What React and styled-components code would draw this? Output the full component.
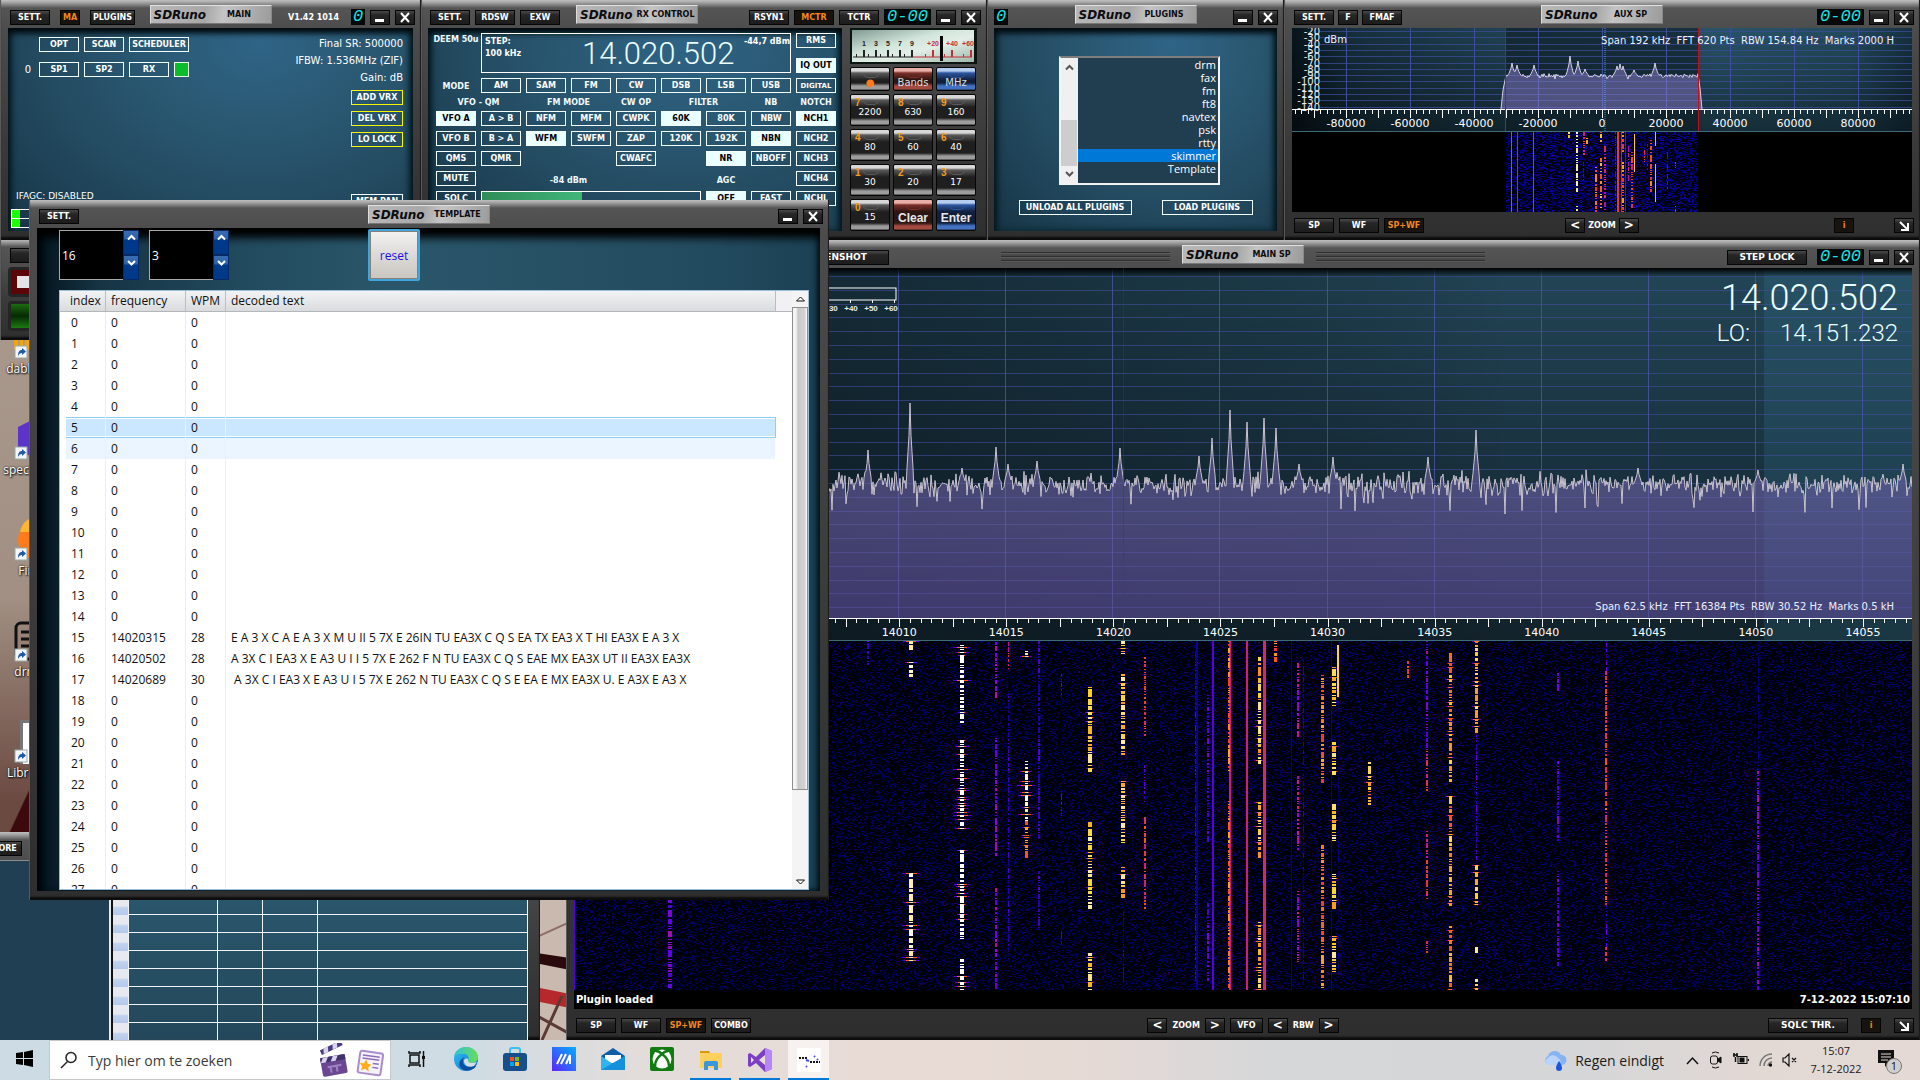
import React, { useLayoutEffect, useRef, useState } from "react";
import styled, { createGlobalStyle, css } from "styled-components";

const wide = `"DejaVu Sans", Verdana, sans-serif`;
const ui = `"Open Sans", "Noto Sans", sans-serif`;

const Global = createGlobalStyle`
  * { box-sizing: border-box; }
  html, body, #root { height: 100%; }
  body { margin: 0; overflow: hidden; background: #a99a8e; font-family: ${wide}; }
  button, input { font: inherit; margin: 0; }
  button { cursor: pointer; }
`;

/* ---------- shell ---------- */

const Screen = styled.div`
  display: flex;
  flex-direction: column;
  height: 100vh;
`;

const Desktop = styled.main`
  position: relative;
  flex: 1;
  min-height: 0;
  overflow: hidden;
  background:
    linear-gradient(115deg, transparent 0 46%, #3c0a0d 47%) 0 700px / 60px 200px no-repeat,
    linear-gradient(#b3a497, #a08f82 600px, #6b4a42 800px);
`;

const Mural = styled.svg`
  position: absolute;
  left: 530px;
  bottom: 0;
  width: 40px;
  height: 150px;
`;

/* ---------- window frame ---------- */

const Frame = styled.section`
  position: absolute;
  display: flex;
  flex-direction: column;
  left: ${(p) => p.$left}px;
  top: ${(p) => p.$top}px;
  ${(p) => (p.$width ? `width: ${p.$width}px;` : "right: 0;")}
  ${(p) => (p.$height ? `height: ${p.$height}px;` : "bottom: 0;")}
  overflow: hidden;
  background: linear-gradient(#c0c0c0 0, #aaa 2px, #8e8e8e 4px, #555 8px, #4c4c4c 30px, #3a3a3a 60%, #2e2e2e);
  box-shadow: inset -1px 0 #1c1c1c, inset 1px 0 #5a5a5a, inset 0 -3px 2px #0c0c0c;
`;

const TitleBar = styled.header`
  display: grid;
  grid-template-columns: ${(p) => p.$columns || "1fr 122px 1fr"};
  flex: none;
  height: 28px;
  padding-top: 4px;
`;

const BarGroup = styled.div`
  display: flex;
  align-items: center;
  justify-content: ${(p) => (p.$end ? "flex-end" : "flex-start")};
  gap: ${(p) => p.$gap || 5}px;
  min-width: 0;
  padding: 5px ${(p) => (p.$right ? 6 : 0)}px 4px ${(p) => p.$pad || 0}px;
`;

const Plate = styled.h1`
  display: grid;
  grid-template-columns: 54px 1fr;
  align-items: center;
  height: 19px;
  margin: 1px 0 0;
  padding-left: 3px;
  color: #0c0c10;
  font: bold 8px ${wide};
  text-align: center;
  white-space: nowrap;
  background: linear-gradient(100deg, #b8b8b8, #a8a8a8 45%, #c4c4c4 60%, #9c9c9c);
  border: 1px solid;
  border-color: #e2e2e2 #888 #777 #ddd;
`;

const Brand = styled.em`
  font: italic bold 12px ${wide};
  text-align: left;
`;

const DarkButton = styled.button`
  display: inline-flex;
  align-items: center;
  justify-content: center;
  flex: none;
  width: ${(p) => p.$w || 40}px;
  height: 15px;
  padding: 0;
  border: 1px solid #050505;
  background: linear-gradient(#4a4a4a, #262626 4px, #1c1c1c);
  color: ${(p) => (p.$on ? "#f0871f" : "#fff")};
  font: bold ${(p) => (p.$glyph ? 12 : p.$large ? 9 : 8)}px/13px ${wide};
  white-space: nowrap;
  ${(p) => p.$on && "background: #17130f;"}
`;

const Led = styled.output`
  display: flex;
  align-items: center;
  justify-content: center;
  width: ${(p) => p.$w || 47}px;
  height: 16px;
  overflow: hidden;
  background: #050808;
  color: #16e4e4;
  font: italic 17px/16px "Liberation Mono", monospace;
`;

const Version = styled.span`
  padding-right: 7px;
  color: #fff;
  font: bold 8px ${wide};
  white-space: nowrap;
`;

const Grip = styled.i`
  flex: none;
  width: 169px;
  height: 11px;
  margin: ${(p) => (p.$left ? "0 12px 0 111px" : "0 auto 0 12px")};
  background: repeating-linear-gradient(#2f2f2f 0 1px, #5c5c5c 1px 2px, #484848 2px 4px);
`;

const Body = styled.div`
  display: flex;
  flex: 1;
  min-height: 0;
  gap: 8px;
  padding: ${(p) => p.$pad || "0 8px 9px"};
`;

const glass = css`
  background: radial-gradient(ellipse at 62% 8%, #2f6486, #2a5872 32%, #234a60 62%, #173546);
  box-shadow: inset 0 5px 6px #02090d, inset 4px 0 6px #0c2530, inset -4px 0 6px #0c2530, inset 0 -2px 3px #1d5060;
`;

const Panel = styled.div`
  flex: 1;
  min-width: 0;
  ${glass}
`;

const LineButton = styled.button`
  display: flex;
  align-items: center;
  justify-content: center;
  flex: none;
  width: ${(p) => p.$w || 40}px;
  height: 15px;
  padding: 0;
  border: 1px solid ${(p) => (p.$yellow ? "#f6f600" : "#f4ffff")};
  background: ${(p) => (p.$on ? "#eaffff" : "transparent")};
  color: ${(p) => (p.$on ? "#000" : "#fff")};
  font: bold ${(p) => (p.$small ? 7 : 8)}px ${wide};
  white-space: nowrap;
`;

function MinClose() {
  return (
    <>
      <DarkButton $w={20} aria-label="Minimise">
        <svg width="14" height="11"><rect x="2" y="7" width="9" height="3" fill="#fff" /></svg>
      </DarkButton>
      <DarkButton $w={20} aria-label="Close">
        <svg width="12" height="11"><path d="M2 1l8 9M10 1l-8 9" stroke="#fff" strokeWidth="2" /></svg>
      </DarkButton>
    </>
  );
}

const Title = ({ children }) => (
  <Plate><Brand>SDRuno</Brand><span>{children}</span></Plate>
);

/* ---------- MAIN ---------- */

const MainPanel = styled(Panel)`
  display: flex;
  justify-content: space-between;
  padding: 9px 10px 3px 3px;
  color: #fff;
  font-size: 10px;
`;

const Column = styled.div`
  display: flex;
  flex-direction: column;
  align-items: ${(p) => (p.$end ? "flex-end" : "flex-start")};
`;

const ButtonRow = styled.div`
  display: flex;
  align-items: center;
  gap: 5px;
  height: 15px;
  margin-bottom: 10px;
`;

const Slot = styled.span`
  width: 23px;
  padding-right: 3px;
  text-align: right;
`;

const Green = styled.i`
  width: 15px;
  height: 15px;
  background: #0bbc2b;
  border: 1px solid #eaffea;
`;

const Info = styled.p`
  margin: 0;
  height: 17px;
  line-height: 13px;
  white-space: nowrap;
`;

const VrxStack = styled.div`
  display: grid;
  gap: 6px;
  margin-top: 2px;
`;

const Push = styled.div`
  margin-top: auto;
  ${(p) => p.$tail && `padding-bottom: ${p.$tail}px;`}
`;

const Agc = styled.div`
  padding: 0 0 8px 5px;
  font-size: 9px;
`;

const Meters = styled.div`
  display: grid;
  grid-template-rows: 9px 8px;
  width: 120px;
  border: 1px solid #fff;
  background: linear-gradient(90deg, #1bff00 8px, transparent 8px);
`;
const MeterLine = styled.i`
  border-bottom: ${(p) => (p.$rule ? "1px solid #fff" : "0")};
`;

function MainWindow() {
  return (
    <Frame $left={0} $top={0} $width={421} $height={240}>
      <TitleBar>
        <BarGroup $pad={10} $gap={10}>
          <DarkButton>SETT.</DarkButton>
          <DarkButton $w={20} $on>MA</DarkButton>
          <DarkButton $w={45}>PLUGINS</DarkButton>
        </BarGroup>
        <Title>MAIN</Title>
        <BarGroup $end $right>
          <Version>V1.42 1014</Version>
          <Led $w={14}>0</Led>
          <MinClose />
        </BarGroup>
      </TitleBar>
      <Body>
        <MainPanel>
          <Column>
            <ButtonRow>
              <Slot />
              <LineButton>OPT</LineButton>
              <LineButton>SCAN</LineButton>
              <LineButton $w={60}>SCHEDULER</LineButton>
            </ButtonRow>
            <ButtonRow>
              <Slot>0</Slot>
              <LineButton>SP1</LineButton>
              <LineButton>SP2</LineButton>
              <LineButton>RX</LineButton>
              <Green />
            </ButtonRow>
            <Push>
              <Agc>IFAGC: DISABLED</Agc>
              <Meters><MeterLine $rule /><MeterLine /></Meters>
            </Push>
          </Column>
          <Column $end>
            <Info>Final SR: 500000</Info>
            <Info>IFBW: 1.536MHz (ZIF)</Info>
            <Info>Gain: dB</Info>
            <VrxStack>
              <LineButton $w={52} $yellow>ADD VRX</LineButton>
              <LineButton $w={52} $yellow>DEL VRX</LineButton>
              <LineButton $w={52} $yellow>LO LOCK</LineButton>
            </VrxStack>
            <Push $tail={19}><LineButton $w={52}>MEM PAN</LineButton></Push>
          </Column>
        </MainPanel>
      </Body>
    </Frame>
  );
}

/* ---------- RX CONTROL ---------- */

const RxPanel = styled(Panel)`
  display: grid;
  grid-template-columns: repeat(9, 40px);
  grid-template-rows: 40px 15px 8px repeat(5, 15px);
  gap: 5px;
  align-content: start;
  padding: 5px 8px;
`;

const Legend = styled.span`
  grid-column: span ${(p) => p.$span || 1};
  align-self: ${(p) => p.$align || "center"};
  justify-self: center;
  padding-top: 2px;
  color: #f1fbff;
  font: bold 8px/10px ${wide};
  white-space: nowrap;
`;

const FreqBox = styled.div`
  grid-column: span 7;
  display: grid;
  grid-template-columns: 97px 1fr auto;
  border: 1px solid #fff;
  padding: 2px 0 0 3px;
  color: #fff;
  font: bold 8px/12px ${wide};
  white-space: nowrap;
`;

const Digits = styled.output`
  color: #eaffff;
  font: 300 ${(p) => p.$size}px/1 Roboto, sans-serif;
`;

const BoxDigits = styled(Digits)`
  padding-top: 2px;
`;

const Stack = styled.div`
  display: flex;
  flex-direction: column;
  justify-content: space-between;
`;

const Level = styled.div`
  grid-column: span 5;
  height: 15px;
  border: 1px solid #fff;
  background: linear-gradient(90deg, #2f8c58, #41b679) 0 0 / 46% 100% no-repeat;
`;

const Blank = styled.i`
  grid-column: span ${(p) => p.$span || 1};
`;

const Keys = styled.div`
  display: grid;
  grid-template-columns: repeat(3, 40px);
  grid-template-rows: 36px 24px repeat(4, 32px);
  gap: 3px 3px;
  width: 128px;
`;

const MeterFace = styled.svg`
  grid-column: span 3;
  width: 127px;
  height: 36px;
`;

const tones = {
  grey: ["#d8d8d8", "#5a5a5a", "#1f1f1f", "#9c9c9c"],
  red: ["#e8b0a8", "#7a2f28", "#2c1512", "#a34a41"],
  blue: ["#b5cdf0", "#2c55a0", "#101f3c", "#4272c4"],
};

const Key = styled.button`
  position: relative;
  padding: ${(p) => (p.$digit ? "4px 0 0" : "6px 0 0")};
  border: 1px solid #060606;
  border-radius: 2px;
  color: ${(p) => p.$ink || "#fff"};
  font: ${(p) => (p.$big ? `bold 12px "Liberation Sans", sans-serif` : p.$mid ? `10px ${wide}` : `9px ${wide}`)};
  background: linear-gradient(
    ${(p) => tones[p.$tone || "grey"][0]} 0,
    ${(p) => tones[p.$tone || "grey"][0]} 3px,
    ${(p) => tones[p.$tone || "grey"][1]} 5px,
    ${(p) => tones[p.$tone || "grey"][2]} 12px,
    ${(p) => tones[p.$tone || "grey"][2]} calc(100% - 7px),
    ${(p) => tones[p.$tone || "grey"][3]} calc(100% - 4px),
    ${(p) => tones[p.$tone || "grey"][3]} calc(100% - 1px),
    #222
  );
  &::before {
    content: "";
    position: absolute;
    top: 5px;
    left: 12px;
    width: 14px;
    height: 4px;
    border: 1px solid ${(p) => tones[p.$tone || "grey"][1]};
    border-top: 0;
    border-radius: 0 0 7px 7px;
  }
`;

const KeyDigit = styled.b`
  position: absolute;
  left: 4px;
  top: 3px;
  color: #f59a1c;
  font: bold 10px/10px "Liberation Sans", sans-serif;
`;

function SMeter() {
  const ticks = [14, 26, 38, 50, 62, 83, 102, 121];
  const names = ["1", "3", "5", "7", "9", "+20", "+40", "+60"];
  return (
    <MeterFace viewBox="0 0 127 36">
      <defs>
        <linearGradient id="face" x1="0" y1="0" x2="1" y2="1">
          <stop offset="0" stopColor="#7f9a92" /><stop offset=".4" stopColor="#d3e6dc" />
          <stop offset=".6" stopColor="#e2eee6" /><stop offset="1" stopColor="#9fb8ac" />
        </linearGradient>
      </defs>
      <rect width="127" height="36" fill="#0a1512" />
      <rect x="2" y="2" width="122" height="32" fill="url(#face)" />
      <path d="M3 29H63" stroke="#222" />
      <path d="M63 29H122" stroke="#c0303c" />
      {ticks.map((x, i) => (
        <g key={x} fill={i < 5 ? "#222" : "#c0303c"}>
          <rect x={x - 1} y="22" width="2" height="7" />
          <rect x={x - 8} y="26" width="1" height="3" />
          <text x={i === 7 ? 118 : x} y="18" textAnchor="middle" fontFamily="Liberation Sans" fontWeight="bold" fontSize="7">{names[i]}</text>
        </g>
      ))}
      <rect x="90" y="8" width="3" height="25" fill="#050505" />
    </MeterFace>
  );
}

const B = (t, on, small) => <LineButton key={t} $on={on} $small={small}>{t}</LineButton>;

function RxWindow() {
  const pad = [["7", "2200"], ["8", "630"], ["9", "160"], ["4", "80"], ["5", "60"], ["6", "40"], ["1", "30"], ["2", "20"], ["3", "17"], ["0", "15"]];
  return (
    <Frame $left={421} $top={0} $width={566} $height={240}>
      <TitleBar $columns="155px 122px 1fr">
        <BarGroup $pad={9}>
          <DarkButton>SETT.</DarkButton><DarkButton>RDSW</DarkButton><DarkButton>EXW</DarkButton>
        </BarGroup>
        <Title>RX CONTROL</Title>
        <BarGroup $end $right>
          <DarkButton>RSYN1</DarkButton><DarkButton $on>MCTR</DarkButton><DarkButton>TCTR</DarkButton>
          <Led>0-00</Led>
          <MinClose />
        </BarGroup>
      </TitleBar>
      <Body $pad="0 9px 9px 7px">
        <RxPanel>
          <Legend $align="start">DEEM 50u</Legend>
          <FreqBox>
            <span>STEP:<br />100 kHz</span>
            <BoxDigits $size={31}>14.020.502</BoxDigits>
            <span>-44,7 dBm</span>
          </FreqBox>
          <Stack>{B("RMS")}{B("IQ OUT", true)}</Stack>

          <Legend>MODE</Legend>
          {["AM", "SAM", "FM", "CW", "DSB", "LSB", "USB"].map((t) => B(t))}
          {B("DIGITAL", false, true)}

          <Legend $span={2}>VFO - QM</Legend>
          <Legend $span={2}>FM MODE</Legend>
          <Legend>CW OP</Legend>
          <Legend $span={2}>FILTER</Legend>
          <Legend>NB</Legend>
          <Legend>NOTCH</Legend>

          {B("VFO A", true)}{["A > B", "NFM", "MFM", "CWPK"].map((t) => B(t))}{B("60K", true)}{B("80K")}{B("NBW")}{B("NCH1", true)}
          {B("VFO B")}{B("B > A")}{B("WFM", true)}{["SWFM", "ZAP", "120K", "192K"].map((t) => B(t))}{B("NBN", true)}{B("NCH2")}
          {B("QMS")}{B("QMR")}<Blank $span={2} />{B("CWAFC")}<Blank />{B("NR", true)}{B("NBOFF")}{B("NCH3")}
          {B("MUTE")}<Blank /><Legend $span={2} $align="end">-84 dBm</Legend><Blank $span={2} /><Legend $align="end">AGC</Legend><Blank />{B("NCH4")}
          {B("SQLC")}<Level />{B("OFF", true)}{B("FAST")}{B("NCHL")}
        </RxPanel>
        <Keys>
          <SMeter />
          <Key $ink="#ff7a1c" $mid>●</Key>
          <Key $tone="red" $mid $ink="#ddd">Bands</Key>
          <Key $tone="blue" $mid $ink="#ddd">MHz</Key>
          {pad.map(([d, t]) => <Key key={d} $digit><KeyDigit>{d}</KeyDigit>{t}</Key>)}
          <Key $tone="red" $big $ink="#e8e8e8">Clear</Key>
          <Key $tone="blue" $big $ink="#e8e8e8">Enter</Key>
        </Keys>
      </Body>
    </Frame>
  );
}

/* ---------- PLUGINS ---------- */

const PluginPanel = styled(Panel)`
  display: flex;
  flex-direction: column;
  align-items: center;
  gap: 15px;
  padding-top: 28px;
`;

const ListBox = styled.div`
  display: flex;
  width: 161px;
  height: 129px;
  margin-left: 8px;
  border: 2px solid #f3f3f3;
  border-top-color: #7d7d7d;
  background: #203e50;
`;

const SideScroll = styled.div`
  display: flex;
  flex-direction: column;
  justify-content: space-between;
  align-items: center;
  width: 17px;
  padding: 5px 0;
  background: linear-gradient(#cdcdcd, #cdcdcd) 0 62px / 16px 46px no-repeat #f0f0f0;
`;

const List = styled.ul`
  flex: 1;
  margin: 0;
  padding: 0;
  list-style: none;
  color: #fff;
  font: 11px/13px ${ui};
  text-align: right;
`;

const ListItem = styled.li`
  padding-right: 2px;
  background: ${(p) => (p["aria-selected"] ? "#0078d7" : "transparent")};
`;

const WideRow = styled.div`
  display: flex;
  gap: 30px;
`;

const Chevron = ({ down, color = "#555", size = 9 }) => (
  <svg width={size} height={size} viewBox="0 0 9 9">
    <path d={down ? "M1 3l3.500 3.500L8 3" : "M1 6.500L4.500 3 8 6.500"} fill="none" stroke={color} strokeWidth="2" />
  </svg>
);

function PluginsWindow() {
  return (
    <Frame $left={987} $top={0} $width={297} $height={240}>
      <TitleBar>
        <BarGroup $pad={7}><Led $w={14}>0</Led></BarGroup>
        <Title>PLUGINS</Title>
        <BarGroup $end $right><MinClose /></BarGroup>
      </TitleBar>
      <Body $pad="0 7px 9px">
        <PluginPanel>
          <ListBox>
            <SideScroll><Chevron /><Chevron down /></SideScroll>
            <List role="listbox" aria-label="Plugins">
              {["drm", "fax", "fm", "ft8", "navtex", "psk", "rtty", "skimmer", "Template"].map((n) => (
                <ListItem key={n} role="option" aria-selected={n === "skimmer"}>{n}</ListItem>
              ))}
            </List>
          </ListBox>
          <WideRow>
            <LineButton $w={113}>UNLOAD ALL PLUGINS</LineButton>
            <LineButton $w={91}>LOAD PLUGINS</LineButton>
          </WideRow>
        </PluginPanel>
      </Body>
    </Frame>
  );
}

/* ---------- spectrum + waterfall drawing ---------- */

function seeded(seed) {
  let s = seed;
  return () => {
    s = (s * 1664525 + 1013904223) % 4294967296;
    return s / 4294967296;
  };
}

function useWidth(initial) {
  const ref = useRef(null);
  const [width, setWidth] = useState(initial);
  useLayoutEffect(() => {
    const read = () => setWidth(ref.current.clientWidth);
    read();
    window.addEventListener("resize", read);
    return () => window.removeEventListener("resize", read);
  }, []);
  return [ref, width];
}

function tracePoints({ from, to, base, jitter, peaks, seed, dips }) {
  const rnd = seeded(seed);
  const out = [];
  for (let x = from; x <= to; x += 1) {
    let y = base + (rnd() + rnd() + rnd() - 1.5) * jitter;
    if (rnd() < dips) y += rnd() * jitter * 2.4;
    for (const [px, py] of peaks) {
      const d = Math.abs(x - px);
      if (d < 4) y = Math.min(y, py + (d < 1 ? 0 : (base - py) * (0.2 + d * 0.2)));
    }
    out.push(`${x} ${y.toFixed(1)}`);
  }
  return out;
}

const stops = [
  [0, 0, 0, 0], [0.2, 10, 0, 150], [0.4, 100, 0, 235], [0.55, 210, 20, 130],
  [0.7, 250, 70, 20], [0.85, 255, 210, 30], [1, 255, 255, 255],
];
function heat(v) {
  const t = Math.max(0, Math.min(1, v));
  for (let i = 1; i < stops.length; i += 1) {
    if (t <= stops[i][0]) {
      const a = stops[i - 1];
      const b = stops[i];
      const k = (t - a[0]) / (b[0] - a[0]);
      return `rgb(${[1, 2, 3].map((j) => Math.round(a[j] + (b[j] - a[j]) * k)).join(",")})`;
    }
  }
  return "#fff";
}

const WaterCanvas = styled.canvas`
  display: block;
  flex: 1;
  width: 100%;
  min-height: 0;
`;

/* signals: [x, heat, width, [[y0, y1], ...], solid] in the units of refWidth */
function Waterfall({ refWidth, band, signals, noise, seed, splash }) {
  const ref = useRef(null);
  useLayoutEffect(() => {
    const paint = () => {
      const c = ref.current;
      const w = (c.width = c.clientWidth);
      const h = (c.height = c.clientHeight);
      const g = c.getContext("2d");
      const rnd = seeded(seed);
      const k = w / refWidth;
      g.fillStyle = "#000";
      g.fillRect(0, 0, w, h);
      const [b0, b1] = band.map((v) => Math.round(v * k));
      g.fillStyle = "#000008";
      g.fillRect(b0, 0, b1 - b0, h);
      for (let y = 0; y < h; y += 1) {
        for (let x = b0; x < b1; x += 2) {
          const r = rnd();
          if (r < noise) {
            g.fillStyle = `rgb(${r < noise / 12 ? 30 : 0},0,${Math.round(44 + rnd() * (noise > 0.4 ? 130 : 66))})`;
            g.fillRect(x, y, 2, 1);
          }
        }
      }
      signals.forEach(([sx, level, sw, spans, solid]) => {
        const x = Math.round(sx * k);
        const hot = level > 0.96;
        spans.forEach(([y0, y1]) => {
          let y = y0;
          while (y < Math.min(y1, h)) {
            const run = solid ? y1 - y0 : 1 + Math.floor(rnd() * rnd() * 9);
            const v = solid ? level : level - rnd() * (hot ? 0.06 : 0.16);
            const end = Math.min(y + run, y1);
            if (splash && level > 0.84 && !solid && rnd() < (hot ? 0.5 : 0.3)) {
              const s = hot ? 4 + Math.floor(rnd() * 6) : 3 + Math.floor(rnd() * 3);
              g.fillStyle = heat(0.36);
              g.fillRect(x - s, y, s * 2, 1);
              g.fillStyle = heat(0.72);
              g.fillRect(x - Math.round(s * 0.6), y, Math.round(s * 1.2), 1);
            }
            g.fillStyle = heat(v);
            g.fillRect(x - Math.floor(sw / 2), y, sw, end - y);
            y = end + (solid ? 0 : 1 + Math.floor(rnd() * 2));
          }
        });
      });
    };
    paint();
    window.addEventListener("resize", paint);
    return () => window.removeEventListener("resize", paint);
  }, [refWidth, band, signals, noise, seed, splash]);
  return <WaterCanvas ref={ref} />;
}

const Plot = styled.div`
  position: relative;
  flex: none;
  height: ${(p) => p.$h}px;
`;

const PlotSvg = styled.svg`
  display: block;
  width: 100%;
  height: 100%;
  font: 11px ${wide};
`;

const PlotInfo = styled.div`
  position: absolute;
  right: 18px;
  ${(p) => (p.$bottom ? "bottom: 28px;" : "top: 6px;")}
  color: #eef;
  font: 10px/13px ${wide};
  white-space: pre;
`;

const Screenful = styled.div`
  display: flex;
  flex-direction: column;
  flex: 1;
  min-height: 0;
  margin: 0 8px;
  background: #000;
`;

const Tools = styled.footer`
  display: grid;
  grid-template-columns: 1fr auto 1fr;
  align-items: start;
  flex: none;
  height: ${(p) => p.$h}px;
  padding: ${(p) => p.$top}px 6px 0;
`;

const ToolGroup = styled.div`
  display: flex;
  align-items: center;
  justify-content: ${(p) => (p.$end ? "flex-end" : "flex-start")};
  gap: ${(p) => p.$gap || 5}px;
  padding-left: ${(p) => (p.$start ? 4 : 0)}px;
  color: #fff;
  font: bold 8px ${wide};
`;

const ArrowIcon = () => (
  <svg width="12" height="12"><path d="M2 2l7 7M10 3v7H3" fill="none" stroke="#fff" strokeWidth="2" /></svg>
);

function Ruler({ width, y, step, origin, minor, labels, dy }) {
  const marks = [];
  const per = step / minor;
  for (let i = -Math.ceil(origin / per); origin + i * per < width; i += 1) {
    const x = Math.round(origin + i * per);
    const len = i % (minor / 2) === 0 ? 8 : 4;
    marks.push(<rect key={i} x={x} y={y} width="1" height={len} fill="#fff" />);
  }
  return (
    <g>
      <rect x="0" y={y - 1} width={width} height="1" fill="#fff" />
      {marks}
      {labels.map(([i, t]) => (
        <text key={t} x={origin + i * step} y={y + dy} textAnchor="middle" fill="#fff">{t}</text>
      ))}
    </g>
  );
}

/* ---------- AUX SP ---------- */

const auxPeaks = [[220, 35], [225, 37], [242, 37], [278, 28], [286, 33], [293, 41], [325, 38], [328, 36], [331, 38], [363, 35], [342, 42]];
const auxBand = [214, 406];
const all = [[0, 400]];
const auxSignals = [
  [219, 0.66, 1, all, 1], [225, 0.55, 1, all, 1], [241, 0.6, 1, all, 1], [277, 0.95, 2, [[0, 8]]],
  [285, 0.97, 2, [[0, 62], [74, 80]]], [292, 0.7, 2, [[0, 24]]], [295, 0.9, 2, [[6, 12]]], [291, 0.45, 1, [[30, 50]]],
  [304, 0.8, 2, [[35, 80]]], [309, 0.86, 2, [[26, 76], [0, 12]]], [313, 0.65, 2, [[14, 66], [70, 80]]],
  [326, 0.65, 2, all, 1], [329, 0.55, 1, all, 1], [331, 0.8, 2, [[0, 20], [30, 80]]], [333, 0.4, 1, all, 1], [336, 0.6, 1, [[14, 50]]],
  [340, 0.72, 2, [[20, 76]]], [342, 0.84, 1, [[2, 40]], 1], [323, 0.45, 1, all], [352, 0.78, 1, [[18, 30]]],
  [359, 0.78, 2, [[8, 62]]], [363, 0.82, 1, [[0, 14], [32, 70]], 1], [355, 0.45, 1, [[12, 40]]],
  [375, 0.45, 1, [[20, 58]]], [383, 0.7, 1, [[30, 36], [74, 80]]],
];

function AuxPlot() {
  const [ref, w] = useWidth(620);
  const k = w / 620;
  const mid = 310 * k;
  const step = 64 * k;
  const trace = tracePoints({
    from: Math.round(214 * k), to: Math.round(406 * k), base: 48, jitter: 2.4, seed: 5, dips: 0,
    peaks: auxPeaks.map(([x, y]) => [Math.round(x * k), y]),
  });
  const line = `M${Math.round(209 * k)} 81L${Math.round(211 * k)} 62L${trace.join("L")}L${Math.round(408 * k)} 60L${Math.round(410 * k)} 81`;
  const db = Array.from({ length: 13 }, (_, i) => i);
  return (
    <Plot ref={ref} $h={104}>
      <PlotSvg>
        <defs>
          <linearGradient id="auxbg"><stop offset="0" stopColor="#07141b" /><stop offset=".1" stopColor="#16303d" />
            <stop offset=".3" stopColor="#1e3f4f" /><stop offset=".7" stopColor="#285468" /><stop offset=".9" stopColor="#234b5d" /><stop offset="1" stopColor="#15303e" /></linearGradient>
          <linearGradient id="shade" x2="0" y2="1"><stop offset="0" stopColor="#000" stopOpacity="0" /><stop offset="1" stopColor="#000" stopOpacity=".45" /></linearGradient>
        </defs>
        <rect width={w} height="104" fill="url(#auxbg)" />
        <rect width={w} height="104" fill="url(#shade)" />
        <rect x={214 * k} width={192 * k} height="104" fill="#0e1c24" opacity=".6" />
        {db.map((i) => <rect key={i} x="28" y={3 + Math.round(i * 6.3)} width={w} height="1" fill="#3c4a94" opacity=".8" />)}
        {[-4, -3, -2, -1, 0, 1, 2, 3, 4].map((i) => <rect key={i} x={Math.round(mid + i * step)} y="0" width="1" height="81" fill="#3f4e9a" />)}
        <path d={line} fill="#8c7fd0" fillOpacity=".5" stroke="#d5cfe4" />
        {db.map((i) => <text key={i} x="28" y={7 + Math.round(i * 6.3)} textAnchor="end" fill="#e4eaf0" fontSize="10">{-20 - i * 10}</text>)}
        <text x="32" y="15" fill="#eef" fontSize="10">dBm</text>
        <Ruler width={w} y={82} step={step} origin={mid} minor={10} dy={17}
          labels={[-4, -3, -2, -1, 0, 1, 2, 3, 4].map((i) => [i, String(i * 20000)])} />
        <path d={`M${mid + 3} 0V104`} stroke="#57b4ff" strokeOpacity=".8" strokeDasharray="1 1" />
        <path d={`M${Math.round(214 * k) - 0.5} 0V104M${Math.round(406 * k) + 0.5} 0V104`} stroke="#c00f1a" />
        <rect y="103" width={w} height="1" fill="#3d6c78" />
      </PlotSvg>
      <PlotInfo>{"Span 192 kHz  FFT 620 Pts  RBW 154.84 Hz  Marks 2000 H"}</PlotInfo>
    </Plot>
  );
}

function AuxWindow() {
  return (
    <Frame $left={1284} $top={0} $height={240}>
      <TitleBar>
        <BarGroup $pad={10} $gap={4}>
          <DarkButton>SETT.</DarkButton><DarkButton $w={20}>F</DarkButton><DarkButton>FMAF</DarkButton>
        </BarGroup>
        <Title>AUX SP</Title>
        <BarGroup $end $right><Led>0-00</Led><MinClose /></BarGroup>
      </TitleBar>
      <Screenful>
        <AuxPlot />
        <Waterfall refWidth={620} band={auxBand} signals={auxSignals} noise={0.55} seed={11} />
      </Screenful>
      <Tools $h={28} $top={6}>
        <ToolGroup $start><DarkButton>SP</DarkButton><DarkButton>WF</DarkButton><DarkButton $on>SP+WF</DarkButton></ToolGroup>
        <ToolGroup $gap={3}><DarkButton $w={20} $glyph>&lt;</DarkButton>ZOOM<DarkButton $w={20} $glyph>&gt;</DarkButton></ToolGroup>
        <ToolGroup $end $gap={40}>
          <DarkButton $w={20} $on>i</DarkButton>
          <DarkButton $w={20} aria-label="Resize"><ArrowIcon /></DarkButton>
        </ToolGroup>
      </Tools>
    </Frame>
  );
}

/* ---------- MAIN SP ---------- */

const spPeaks = [
  [294, 182], [336, 135], [422, 179], [463, 193], [546, 180], [625, 188], [638, 170], [656, 142], [672, 154],
  [689, 150], [701, 160], [724, 196], [758, 189], [853, 189], [901, 162], [1063, 200], [1183, 202], [1328, 196], [388, 200], [434, 196],
];
const spBand = [0, 1337];
const spSignals = [
  [0, 0.36, 2, all, 1], [96, 0.5, 4, [[255, 400]]], [12, 0.16, 1, all],
  [294, 0.42, 2, [[0, 24]]],
  [337, 0.99, 4, [[0, 9], [21, 36], [232, 320]]],
  [388, 1.05, 4, [[4, 82], [99, 188], [209, 298], [318, 349]]],
  [422, 0.52, 2, [[1, 57], [97, 215], [247, 349]]],
  [434, 0.68, 1, [[1, 29]]], [434, 0.36, 1, [[50, 310]]],
  [452, 0.99, 3, [[10, 18], [120, 180]]], [452, 0.85, 3, [[180, 218]]],
  [465, 0.38, 2, [[0, 200], [230, 290]]], [487, 0.38, 1, [[33, 57], [150, 175], [290, 305]]],
  [516, 0.95, 4, [[46, 131], [181, 269], [312, 349]]],
  [549, 0.94, 4, [[0, 13], [33, 114], [140, 204], [226, 259]]], [549, 0.3, 1, [[270, 340]]],
  [571, 0.72, 2, [[16, 95], [176, 268]]], [570, 0.45, 1, [[124, 161]]],
  [623, 0.2, 2, all, 1], [621, 0.4, 1, [[10, 340]]], [634, 0.44, 2, [[54, 201], [262, 340]]],
  [639, 0.37, 2, all, 1],
  [656, 0.56, 2, all, 1], [655, 0.82, 2, [[0, 130], [160, 349]]],
  [672, 0.57, 2, all, 1], [684, 0.92, 3, [[16, 125], [161, 217], [281, 349]]], [689, 0.6, 3, all, 1],
  [700, 0.8, 3, [[0, 22]]], [723, 0.6, 2, [[22, 97], [135, 209], [250, 321]]], [728, 0.3, 1, [[20, 340]]],
  [747, 0.82, 3, [[34, 142], [204, 349]]],
  [759, 0.95, 4, [[26, 66], [101, 134], [163, 200], [233, 268], [295, 331]]],
  [763, 0.86, 2, [[4, 56]], 1], [763, 0.2, 1, [[60, 340]]],
  [794, 0.9, 3, [[121, 165]]], [833, 0.8, 2, [[20, 37]]],
  [852, 0.5, 2, [[0, 110]]], [852, 0.7, 2, [[110, 150], [190, 260], [300, 312]]],
  [875, 0.87, 3, [[12, 143], [155, 265], [285, 349]]],
  [901, 0.92, 3, [[0, 94]]], [901, 0.42, 1, [[94, 220]]], [901, 0.95, 3, [[224, 265], [306, 314], [338, 349]]],
  [756, 0.18, 1, all, 1], [716, 0.16, 1, all, 1],
  [983, 0.45, 2, [[32, 50], [120, 200], [230, 325]]], [1031, 0.74, 2, [[30, 265], [306, 320]]],
  [1031, 0.4, 1, [[0, 30], [265, 306]]], [1183, 0.5, 2, [[130, 349]]], [1183, 0.25, 1, [[0, 130]]],
];

const ReadOut = styled.div`
  position: absolute;
  top: 12px;
  right: 14px;
  display: grid;
  justify-items: end;
  gap: 5px;
  color: #eaffff;
`;

const LoLine = styled.div`
  display: flex;
  gap: 30px;
`;

const Status = styled.div`
  display: flex;
  justify-content: space-between;
  flex: none;
  height: 19px;
  padding: 0 2px;
  color: #fff;
  font: bold 10px/19px ${wide};
`;

function SpPlot() {
  const [ref, w] = useWidth(1337);
  const k = w / 1337;
  const step = 107 * k;
  const origin = 325 * k;
  const trace = tracePoints({
    from: 0, to: w, base: 216, jitter: 11, seed: 77, dips: 0.08,
    peaks: spPeaks.map(([x, y]) => [Math.round(x * k), y]),
  }).join("L");
  const names = Array.from({ length: 13 }, (_, i) => [i - 3, String(13995 + i * 5)]);
  return (
    <Plot ref={ref} $h={373}>
      <PlotSvg>
        <defs>
          <linearGradient id="spbg" x2="0" y2="1"><stop offset="0" stopColor="#224555" /><stop offset=".4" stopColor="#1b3644" /><stop offset="1" stopColor="#12222b" /></linearGradient>
          <linearGradient id="spleft"><stop offset="0" stopColor="#08131a" stopOpacity=".7" /><stop offset=".5" stopColor="#08131a" stopOpacity=".25" /><stop offset=".7" stopOpacity="0" /></linearGradient>
          <linearGradient id="sptop" x2="0" y2="1"><stop offset="0" stopColor="#000" /><stop offset="1" stopColor="#000" stopOpacity="0" /></linearGradient>
          <linearGradient id="fill" x2="0" y2="1"><stop offset="0" stopColor="#7d70b4" stopOpacity=".55" /><stop offset="1" stopColor="#5e4e9c" stopOpacity=".6" /></linearGradient>
        </defs>
        <rect width={w} height="373" fill="url(#spbg)" />
        <rect width={w} height="373" fill="url(#spleft)" />
        <rect x={1189 * k} width={w} height="373" fill="#3c86a6" opacity=".2" />
        {Array.from({ length: 25 }, (_, i) => <rect key={i} y={8 + Math.round(i * 13.8)} width={w} height="1" fill="#434f9f" opacity=".6" />)}
        {names.map(([i]) => <rect key={i} x={Math.round(origin + i * step) - 1} width="1" height="350" fill="#4b56a4" opacity=".8" />)}
        <path d={`M0 350L${trace}L${w} 350Z`} fill="url(#fill)" />
        <path d={`M${trace}`} fill="none" stroke="#c9c3cf" />
        <rect width={w} height="9" fill="url(#sptop)" />
        <rect x={Math.round(549 * k)} width="1" height="200" fill="#c80a14" opacity=".35" />
        <rect x={Math.round(549 * k)} y="200" width="1" height="173" fill="#c80a14" opacity=".8" />
        <rect x="100" y="20" width={222} height="12" fill="none" stroke="#fff" />
        {["+30", "+40", "+50", "+60"].map((t, i) => (
          <g key={t}><rect x={254 + i * 22} y="32" width="1" height="3" fill="#fff" />
            <text x={257 + i * 20} y="43" fontSize="8" fontWeight="bold" fontFamily="Liberation Sans" textAnchor="middle" fill="#e8eef2">{t}</text></g>
        ))}
        <Ruler width={w} y={351} step={step} origin={origin} minor={10} labels={names} dy={17} />
        <rect y="372" width={w} height="1" fill="#3d6c78" />
      </PlotSvg>
      <ReadOut>
        <Digits $size={36}>14.020.502</Digits>
        <LoLine><Digits $size={24}>LO:</Digits><Digits $size={24}>14.151.232</Digits></LoLine>
      </ReadOut>
      <PlotInfo $bottom>{"Span 62.5 kHz  FFT 16384 Pts  RBW 30.52 Hz  Marks 0.5 kH"}</PlotInfo>
    </Plot>
  );
}

function MainSpWindow() {
  return (
    <Frame $left={566} $top={240}>
      <TitleBar>
        <BarGroup $end $gap={1}><DarkButton $w={112} $large>SCREENSHOT</DarkButton><Grip $left /></BarGroup>
        <Title>MAIN SP</Title>
        <BarGroup $end $right>
          <Grip />
          <DarkButton $w={80} $large>STEP LOCK</DarkButton>
          <span />
          <Led>0-00</Led>
          <MinClose />
        </BarGroup>
      </TitleBar>
      <Screenful>
        <SpPlot />
        <Waterfall refWidth={1337} band={spBand} signals={spSignals} noise={0.32} seed={3} splash />
        <Status><span>Plugin loaded</span><time>7-12-2022 15:07:10</time></Status>
      </Screenful>
      <Tools $h={31} $top={9}>
        <ToolGroup $start><DarkButton>SP</DarkButton><DarkButton>WF</DarkButton><DarkButton $on>SP+WF</DarkButton><DarkButton>COMBO</DarkButton></ToolGroup>
        <ToolGroup>
          <DarkButton $w={20} $glyph>&lt;</DarkButton>ZOOM<DarkButton $w={20} $glyph>&gt;</DarkButton>
          <DarkButton $w={33}>VFO</DarkButton>
          <DarkButton $w={20} $glyph>&lt;</DarkButton>RBW<DarkButton $w={20} $glyph>&gt;</DarkButton>
        </ToolGroup>
        <ToolGroup $end $gap={13}>
          <DarkButton $w={80} $large>SQLC THR.</DarkButton>
          <DarkButton $w={20} $on>i</DarkButton>
          <DarkButton $w={20} aria-label="Resize"><ArrowIcon /></DarkButton>
        </ToolGroup>
      </Tools>
    </Frame>
  );
}

/* ---------- recorder and memory windows, mostly covered ---------- */

const RecorderBody = styled.div`
  display: grid;
  justify-items: start;
  gap: 4px;
  padding-left: 8px;
`;

const Transport = styled.button`
  display: flex;
  align-items: center;
  width: 40px;
  height: 30px;
  padding: 0 0 0 6px;
  border: 3px solid #252525;
  border-radius: 4px;
  background: ${(p) => (p.$stop ? "#5c0507" : "linear-gradient(#1c6b10, #062a03 50%, #1b7a10)")};
`;

function RecorderWindow() {
  return (
    <Frame $left={0} $top={239} $width={200} $height={101}>
      <TitleBar $columns="1fr"><BarGroup $pad={10}><DarkButton aria-label="Settings" /></BarGroup></TitleBar>
      <RecorderBody>
        <Transport $stop aria-label="Stop"><svg width="14" height="12"><rect width="14" height="12" fill="#e4e4e4" /></svg></Transport>
        <Transport aria-label="Play" />
      </RecorderBody>
    </Frame>
  );
}

const MemoryBody = styled.div`
  display: flex;
  flex: 1;
  min-height: 0;
  margin-right: 12px;
  background: #213f52;
`;

const MemorySide = styled.div`
  width: 131px;
  border-right: 2px solid #e8e8e8;
  border-top: 1px solid #8b8b8b;
`;

const MemoryTable = styled.table`
  flex: 1;
  margin-left: 2px;
  border-collapse: collapse;
  table-layout: fixed;
  box-shadow: -2px 0 #111;
  background: linear-gradient(#2b5a70, #24475a);
  th { width: 15px; padding: 0; background: linear-gradient(#e6e9ef 50%, #bfd2ee 60%, #b4c9ea); }
  td { height: 18px; padding: 0; border: 1px solid #eef3f5; }
`;

const cellWidths = [89, 45, 55, undefined];

function MemoryWindow() {
  return (
    <Frame $left={-20} $top={832} $width={560}>
      <TitleBar $columns="1fr"><BarGroup $pad={2}><DarkButton>STORE</DarkButton></BarGroup></TitleBar>
      <MemoryBody>
        <MemorySide />
        <MemoryTable>
          <tbody>
            {Array.from({ length: 10 }, (_, r) => (
              <tr key={r}><th />{cellWidths.map((w, c) => <td key={c} width={w} />)}</tr>
            ))}
          </tbody>
        </MemoryTable>
      </MemoryBody>
    </Frame>
  );
}

/* ---------- TEMPLATE ---------- */

const TemplateBody = styled.div`
  display: flex;
  flex-direction: column;
  flex: 1;
  min-height: 0;
  gap: 9px;
  margin: 0 9px 9px 8px;
  padding: 1px 11px 1px 22px;
  background: linear-gradient(90deg, #04141d, #163444 8%, #214a5d 26%, #2a566b 45%, #234b5f 85%, #1b4053);
  box-shadow: inset 0 10px 8px #000, inset 6px 0 6px #000a10, inset -3px 0 4px #0c2834;
`;

const Controls = styled.div`
  display: grid;
  grid-template-columns: 80px 80px 1fr;
  gap: 10px;
  align-items: center;
  height: 52px;
`;

const Spin = styled.div`
  display: grid;
  grid-template-columns: 1fr 16px;
  height: 50px;
`;

const SpinInput = styled.input`
  grid-row: span 2;
  min-width: 0;
  padding: 0 0 0 2px;
  border: 1px solid #a9a9a9;
  border-right: 0;
  border-radius: 0;
  background: #000;
  color: #fff;
  font: 12px ${ui};
`;

const SpinButton = styled.button`
  display: flex;
  justify-content: center;
  align-items: flex-start;
  padding: 2px 0 0;
  border: 1px solid #062a66;
  background: linear-gradient(#3a6db0 0, #2c60a6 8px, #00398a 9px);
`;

const Reset = styled.button`
  width: 52px;
  height: 52px;
  margin-left: 129px;
  padding: 0;
  border: 2px solid #3fa6de;
  border-radius: 2px;
  background: linear-gradient(#f3f3f2, #dcdad8 50%, #c9c6c0);
  box-shadow: inset 0 0 0 1px #8a7f70;
  color: #1a10e8;
  font: 12px ${ui};
`;

const Grid = styled.div`
  display: flex;
  flex: 1;
  min-height: 0;
  overflow: hidden;
  border: 1px solid #9cc0d8;
  background: #fff;
`;

const Table = styled.table`
  flex: 1;
  height: max-content;
  border-collapse: separate;
  border-spacing: 0;
  table-layout: fixed;
  color: #111;
  font: 12px/20px ${ui};
  white-space: pre;
`;

const Head = styled.th`
  height: 21px;
  padding: 0 0 0 ${(p) => (p.$first ? 10 : 5)}px;
  border-right: 1px solid #b9bcc0;
  border-bottom: 1px solid #b4b7ba;
  background: linear-gradient(#f2f3f5, #d9dbdd);
  font-weight: 400;
  text-align: left;
  &:last-child { border-right: 0; background: #f1f1f3; }
`;

const Cell = styled.td`
  height: 21px;
  padding: 0 0 0 5px;
  border-right: 1px solid #e8f2f6;
  ${(p) => p.$first && "border-left: 6px solid #fff;"}
  ${(p) => p.$state === "hover" && "background: #eaf5ff;"}
  ${(p) => p.$state === "picked" && "background: #cbe6ff; box-shadow: inset 0 1px #8ecdf3, inset 0 -1px #8ecdf3, inset 0 2px #fff, inset 0 -2px #fff;"}
  &:nth-child(4) { border-right-color: ${(p) => (p.$state === "picked" ? "#8ecdf3" : "#fff")}; }
  &:last-child { border: 0; background: #fff; box-shadow: none; }
`;

const Scroll = styled.div`
  display: grid;
  grid-template-rows: 16px 483px 1fr 15px;
  justify-items: center;
  align-items: center;
  width: 16px;
  background: #f4f4f4;
`;

const Thumb = styled.i`
  width: 16px;
  height: 100%;
  border: 1px solid #8f8f8f;
  background: linear-gradient(90deg, #f4f4f4 0 3px, #c8c8c8 5px, #d4d4d4 12px, #fff);
`;

const decoded = {
  15: ["14020315", "28", "E A 3 X C A E A 3 X M U II 5 7X E 26IN TU EA3X C Q S EA TX EA3 X T HI EA3X E A 3 X"],
  16: ["14020502", "28", "A 3X C I EA3 X E A3 U I I 5 7X E 262 F N TU EA3X C Q S EAE MX EA3X UT II EA3X EA3X"],
  17: ["14020689", "30", " A 3X C I EA3 X E A3 U I 5 7X E 262 N TU EA3X C Q S E EA E MX EA3X U. E A3X E A3 X"],
};

function Spinner({ value, label }) {
  return (
    <Spin>
      <SpinInput aria-label={label} defaultValue={value} />
      <SpinButton aria-label={`${label} up`}><Chevron color="#fff" /></SpinButton>
      <SpinButton aria-label={`${label} down`}><Chevron down color="#fff" /></SpinButton>
    </Spin>
  );
}

const Triangle = ({ down }) => (
  <svg width="9" height="6"><path d={down ? "M0.500 1h8l-4 4z" : "M0.500 5h8l-4-4z"} fill="#fff" stroke="#111" /></svg>
);

function TemplateWindow() {
  return (
    <Frame $left={29} $top={200} $width={800} $height={700}>
      <TitleBar>
        <BarGroup $pad={10}><DarkButton>SETT.</DarkButton></BarGroup>
        <Title>TEMPLATE</Title>
        <BarGroup $end $right><MinClose /></BarGroup>
      </TitleBar>
      <TemplateBody>
        <Controls>
          <Spinner value="16" label="Channels" />
          <Spinner value="3" label="Threshold" />
          <Reset>reset</Reset>
        </Controls>
        <Grid>
          <Table>
            <colgroup><col width="46" /><col width="80" /><col width="40" /><col width="550" /><col /></colgroup>
            <thead>
              <tr><Head $first>index</Head><Head>frequency</Head><Head>WPM</Head><Head>decoded text</Head><Head /></tr>
            </thead>
            <tbody>
              {Array.from({ length: 28 }, (_, i) => {
                const [f, wpm, text] = decoded[i] || ["0", "0", ""];
                const state = i === 5 ? "picked" : i === 6 ? "hover" : "";
                return (
                  <tr key={i}>
                    <Cell $first $state={state}>{i}</Cell>
                    <Cell $state={state}>{f}</Cell>
                    <Cell $state={state}>{wpm}</Cell>
                    <Cell $state={state}>{text}</Cell>
                    <Cell />
                  </tr>
                );
              })}
            </tbody>
          </Table>
          <Scroll><Triangle /><Thumb /><span /><Triangle down /></Scroll>
        </Grid>
      </TemplateBody>
    </Frame>
  );
}

/* ---------- desktop shortcuts ---------- */

const Shortcuts = styled.nav`
  position: absolute;
  left: 0;
  top: 332px;
  display: grid;
  grid-auto-rows: 101px;
  width: 75px;
`;

const Shortcut = styled.a`
  display: flex;
  flex-direction: column;
  align-items: center;
  color: #fff;
  font: 12px/18px ${ui};
  text-decoration: none;
  text-shadow: 1px 1px 2px #000, 0 0 2px #000;
  white-space: nowrap;
`;

const ShortcutArt = styled.svg`
  overflow: visible;
`;

const iconArt = {
  bars: <g fill="#f7a400"><rect x="0" y="0" width="4" height="34" /><rect x="6" y="0" width="3" height="34" /><rect x="11" y="0" width="4" height="34" /><rect x="16" y="0" width="26" height="34" /></g>,
  hex: <path d="M4 10L24 0l20 10v24L24 42 4 34z" fill="#5a35c8" />,
  fox: <g><circle cx="24" cy="22" r="20" fill="#ff7b1c" /><path d="M6 14C8 4 14 2 16 0c0 8 6 8 8 14z" fill="#ffb52e" /><circle cx="26" cy="24" r="11" fill="#7a3be0" /></g>,
  radio: <g fill="none" stroke="#111" strokeWidth="3"><rect x="2" y="4" width="44" height="36" rx="5" /><path d="M7 13h18M7 20h18M7 27h18" /></g>,
  page: <g><rect x="6" y="0" width="34" height="44" fill="#777" /><rect x="9" y="3" width="30" height="41" fill="#fff" /></g>,
};

function DesktopIcons() {
  const items = [["bars", "dablin-gtk3"], ["hex", "spectrumvw"], ["fox", "Firefox"], ["radio", "drmPlay"], ["page", "LibreOffice"]];
  return (
    <Shortcuts>
      {items.map(([art, name]) => (
        <Shortcut key={name} href="#">
          <ShortcutArt width="48" height="28" viewBox="0 16 48 28">
            {iconArt[art]}
            <rect x="1" y="30" width="12" height="12" fill="#f4f6f8" stroke="#9aa" />
            <path d="M4 40c0-5 2-6 4-6V32l4 3.500L8 39v-2c-2 0-3 1-4 3z" fill="#1d5aa8" />
          </ShortcutArt>
          {name}
        </Shortcut>
      ))}
    </Shortcuts>
  );
}

/* ---------- taskbar ---------- */

const Taskbar = styled.footer`
  display: flex;
  align-items: stretch;
  flex: none;
  height: 40px;
  color: #1a1a1a;
  background: linear-gradient(90deg, #ccdbe4, #d0dce3 25%, #e2dcda 33%, #e8dbd6 45%, #e6dad5 56%, #d6d7d9 66%, #d5d6d8 82%, #e2d8d4 92%, #e4d9d5);
`;

const Start = styled.button`
  width: 49px;
  padding: 0 1px 0 0;
  border: 0;
  background: transparent;
`;

const Search = styled.label`
  display: flex;
  align-items: center;
  gap: 10px;
  width: 342px;
  padding: 0 4px 0 10px;
  border: 1px solid #c6c9cc;
  background: #fff;
`;

const SearchInput = styled.input`
  flex: 1;
  min-width: 0;
  padding: 0;
  border: 0;
  background: transparent;
  font: 14px ${ui};
  &::placeholder { color: #3a3a3a; opacity: 1; }
`;

const Apps = styled.div`
  display: flex;
  padding-left: 1px;
`;

const AppButton = styled.button`
  display: flex;
  align-items: center;
  justify-content: center;
  width: 49px;
  padding: 0;
  border: solid transparent;
  border-width: 0 4px 2px;
  background: ${(p) => (p.$active ? "#f7f1ef" : "transparent")};
  background-clip: padding-box;
  box-shadow: ${(p) => (p.$open ? "inset 0 -2px #0078d7" : "none")};
  ${(p) => p.$open && "border-bottom-width: 0;"}
`;

const Tray = styled.div`
  display: flex;
  align-items: center;
  gap: 10px;
  margin-left: auto;
  padding-right: 18px;
  font: 14px ${ui};
`;

const Clock = styled.time`
  width: 58px;
  font: 11px/18px ${ui};
  text-align: center;
`;

const Weather = styled.span`
  display: flex;
  align-items: center;
  gap: 8px;
  padding-right: 12px;
`;

const I = ({ children, w = 24 }) => <svg width={w} height="24" viewBox={`0 0 ${w} 24`}>{children}</svg>;

function TaskBar() {
  return (
    <Taskbar>
      <Start aria-label="Start">
        <svg width="17" height="17"><path d="M0 3l7-1v6H0zM8 2l9-2v8H8zM0 9h7v6l-7-1zM8 9h9v8l-9-2z" fill="#000" /></svg>
      </Start>
      <Search>
        <svg width="18" height="18" fill="none" stroke="#222" strokeWidth="1.500"><circle cx="11" cy="6.500" r="5" /><path d="M7.500 10.500L1 17" /></svg>
        <SearchInput placeholder="Typ hier om te zoeken" aria-label="Zoeken" />
        <svg width="68" height="34">
          <g transform="rotate(-10 16 20)">
            <rect x="3" y="13" width="25" height="19" rx="2" fill="#6a4791" /><path d="M3 13h25v5H3z" fill="#40306b" />
            <path d="M6 13h5l-3 5H3zM16 13h5l-3 5h-5z" fill="#d9d3f0" /><path d="M9 23h14M12 23v6M18 23v6" stroke="#9c84c4" strokeWidth="2" />
          </g>
          <g transform="rotate(-26 4 12)"><rect x="4" y="7" width="23" height="5" fill="#4a3a80" /><path d="M8 7h5l-2 5H6zM18 7h5l-2 5h-5z" fill="#d9d3f0" /></g>
          <g transform="rotate(8 52 19)">
            <rect x="40" y="8" width="25" height="24" rx="3" fill="#a98ccc" /><rect x="42" y="10" width="21" height="20" rx="1" fill="#f6f2fb" />
            <path d="M44 13h17M44 16h17M55 20h6M55 24h6" stroke="#8d6fb8" strokeWidth="1.500" /><path d="M48 17l2 4 4 .5-3 3 1 4-4-2-4 2 1-4-3-3 4-.5z" fill="#ffae1a" />
          </g>
        </svg>
      </Search>
      <Apps>
        <AppButton aria-label="Taakweergave"><I w={18}><g fill="none" stroke="#111" strokeWidth="1.500"><rect x="2" y="8" width="9" height="8" /><path d="M1 4v2h11V4M1 20v-2h11v2M15.500 4v16" /></g><rect x="14" y="9" width="3" height="3" fill="#111" /></I></AppButton>
        <AppButton aria-label="Edge"><I><defs><linearGradient id="edge" x2="1" y2="1"><stop offset="0" stopColor="#35c1f1" /><stop offset=".6" stopColor="#1b8de0" /><stop offset="1" stopColor="#0c59a4" /></linearGradient><linearGradient id="edge2"><stop offset="0" stopColor="#2cc3d8" /><stop offset="1" stopColor="#6bdc5a" /></linearGradient></defs>
          <circle cx="12" cy="12" r="12" fill="url(#edge)" /><path d="M0 10C1 3 7 0 12 0c7 0 12 5 12 10 0 4-3 6-6 6-3 0-5-1-4-3 1-1 1-5-3-6C7 6 2 7 0 10z" fill="url(#edge2)" /><path d="M9 13c-1 5 4 9 11 6 1-.5 2 0 1.500 1C18 24 11 25 7 21c-3-3-2-9 4-11-1 1-2 2-2 3z" fill="#0d4f9c" /><path d="M14 12c-1 4 4 5 9 3l-3 4c-6 2-10-1-10-5 0-2 2-3 4-2z" fill="#d5dee4" /></I></AppButton>
        <AppButton aria-label="Store"><I><path d="M7 7V3q0-2 2-2h6q2 0 2 2v4" fill="none" stroke="#3ac0f4" strokeWidth="2" /><rect x="0" y="6" width="24" height="18" rx="3" fill="#174f8c" /><path d="M7 10h4v4H7z" fill="#f25022" /><path d="M12 10h4v4h-4z" fill="#7fba00" /><path d="M7 15h4v4H7z" fill="#00a4ef" /><path d="M12 15h4v4h-4z" fill="#ffb900" /></I></AppButton>
        <AppButton aria-label="MyASUS"><I><defs><linearGradient id="asus" y1="1" x2="1" y2="0"><stop offset="0" stopColor="#5a24ff" /><stop offset="1" stopColor="#00b0ff" /></linearGradient></defs><rect width="24" height="24" fill="url(#asus)" /><path d="M5 17L10 7M9 17l5-10M14 17l4-9v9" stroke="#fff" strokeWidth="2" fill="none" /></I></AppButton>
        <AppButton aria-label="Mail"><I><path d="M0 9L12 1l12 8v14H0z" fill="#0f5fa8" /><path d="M4 8h16v8H4z" fill="#fff" /><path d="M0 9l12 8 12-8v14H0z" fill="#2fb4f0" /><path d="M0 23L24 9v14z" fill="#1590dc" /></I></AppButton>
        <AppButton aria-label="Xbox"><I><rect width="24" height="24" rx="2" fill="#107c10" /><circle cx="12" cy="12" r="9.500" fill="#fff" /><path d="M6 4c3 0 5 2 6 3 1-1 3-3 6-3M12 7c-4 3-7 8-7 12M12 7c4 3 7 8 7 12" stroke="#107c10" strokeWidth="2.500" fill="none" /></I></AppButton>
        <AppButton $open aria-label="Verkenner"><I><path d="M1 3h9l2 3H1z" fill="#d99a0f" /><path d="M1 5h22v15H1z" fill="#ffd15c" /><path d="M5 22v-7q0-2 2-2h10q2 0 2 2v7h-4v-4H9v4z" fill="#3c96dc" /></I></AppButton>
        <AppButton $open aria-label="Visual Studio"><I><path d="M17 0l7 3v18l-7 3-9-9-6 4-2-1V6l2-1 6 4z" fill="#7a3fc4" /><path d="M17 0l7 3v18l-7 3z" fill="#b586f5" /><path d="M17 7v10l-6-5zM3 9l3 3-3 3z" fill="#eadfdb" /></I></AppButton>
        <AppButton $open $active aria-label="SDRuno"><I><rect width="24" height="24" fill="#fff" /><path d="M2 10h9M13 14h10" stroke="#111" strokeWidth="2" strokeDasharray="2 1" /><path d="M9 12l3 1M17 8l1 1M9 18l1 1M20 11l1 1" stroke="#4a4ae0" strokeWidth="2" /></I></AppButton>
      </Apps>
      <Tray>
        <Weather>
          <I><path d="M5 17a5 5 0 010-9 7 7 0 0113-1 5 5 0 011 10z" fill="#86b4f2" /><path d="M4 17a4 4 0 011-7 6 6 0 0110 0 4 4 0 011 7z" fill="#b9d3fa" /><path d="M16 13c2 3 3 5 3 7a3 3 0 01-6 0c0-2 1-4 3-7z" fill="#1a56e0" /></I>
          Regen eindigt
        </Weather>
        <svg width="13" height="9"><path d="M1 8l5.500-6L12 8" fill="none" stroke="#111" strokeWidth="1.500" /></svg>
        <svg width="13" height="18" fill="none" stroke="#111"><path d="M3 2q3.500-2 7 0M3 16q3.500 2 7 0" /><rect x="1.500" y="5" width="7" height="8" rx="2" /><path d="M9 8l3-2v6L9 10z" fill="#111" /></svg>
        <svg width="17" height="16" fill="none" stroke="#111"><rect x="6" y="4.500" width="9" height="7" /><path d="M16.500 7v2M1 3h5M2 1v4M5 1v4M3.500 5v5" strokeWidth="1.500" /><rect x="8" y="6" width="4" height="4" fill="#111" /></svg>
        <svg width="13" height="14" fill="none" stroke="#777" strokeWidth="1.500"><path d="M1 13A12 12 0 0113 1M5 13a8 8 0 018-8M9 13a4 4 0 014-4" /><circle cx="11.500" cy="12" r="1" fill="#111" stroke="#111" /></svg>
        <svg width="15" height="14" fill="none" stroke="#111" strokeWidth="1.200"><path d="M1 5h2l4-4v12L3 9H1zM10 5l4 4M14 5l-4 4" /></svg>
        <Clock>15:07<br />7-12-2022</Clock>
        <svg width="27" height="28"><path d="M3 4h16v13h-6l-3 4v-4H3z" fill="#111" /><path d="M6 8h10M6 11h10M6 14h7" stroke="#e4d9d5" />
          <circle cx="19" cy="20" r="7.500" fill="#d0cfce" stroke="#777" /><text x="19" y="24" textAnchor="middle" fontSize="11" fontFamily="Open Sans" fill="#111">1</text></svg>
      </Tray>
    </Taskbar>
  );
}

export default function App() {
  return (
    <>
      <Global />
      <Screen>
        <Desktop>
          <DesktopIcons />
          <Mural viewBox="0 0 40 150" preserveAspectRatio="none">
            <rect width="40" height="150" fill="#c9b9ae" />
            <path d="M0 10L40 0M0 50l40-18" stroke="#8d6f66" strokeWidth="2" />
            <path d="M0 62l40 6v12L0 72z" fill="#2a0a0c" />
            <path d="M0 96l40 8v14L0 110z" fill="#b5282c" />
            <path d="M12 150l20-44M0 122l40 22" stroke="#5b3a36" strokeWidth="3" />
          </Mural>
          <RecorderWindow />
          <MemoryWindow />
          <MainWindow />
          <RxWindow />
          <PluginsWindow />
          <AuxWindow />
          <MainSpWindow />
          <TemplateWindow />
        </Desktop>
        <TaskBar />
      </Screen>
    </>
  );
}
